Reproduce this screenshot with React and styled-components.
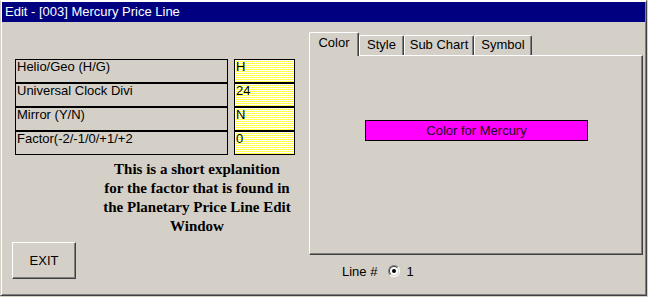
import { Fragment } from 'react';
import styled, { createGlobalStyle } from 'styled-components';

const Global = createGlobalStyle`
  html, body {
    margin: 0;
    padding: 0;
    background: #d4d0c8;
    font-family: "Liberation Sans", Arial, sans-serif;
    font-size: 13px;
    color: #000;
  }
`

const Window = styled.div`
  width: 647px;
  height: 296px;
  box-sizing: border-box;
  border: 1px solid;
  border-color: #fff #404040 #404040 #d4d0c8;
  box-shadow: inset 1px 1px #fff, inset -1px -1px #808080;
  padding: 1px 1px 0 1px;
  display: flex;
  flex-direction: column;
  background: #d4d0c8;
`

const TitleBar = styled.div`
  height: 20px;
  background: #000080;
  color: #fff;
  font-size: 13px;
  line-height: 20px;
  padding-left: 3px;
  white-space: nowrap;
`

const Body = styled.div`
  display: flex;
  flex: 1;
`

const LeftCol = styled.div`
  width: 307px;
  box-sizing: border-box;
  padding: 37px 0 0 10px;
  display: flex;
  flex-direction: column;
  align-items: flex-start;
`

const FieldGrid = styled.div`
  margin-left: 3px;
  display: grid;
  grid-template-columns: 213px 61px;
  grid-auto-rows: 24px;
  column-gap: 6px;
`

const Cell = styled.div`
  box-sizing: border-box;
  border: 1px solid #000;
  line-height: 14px;
  white-space: nowrap;
  overflow: hidden;
`

const Label = styled(Cell)`
  padding-left: 1px;
`

const Value = styled(Cell)`
  padding-left: 1px;
  background-color: #fff;
  background-image: conic-gradient(from 90deg at 1px 1px, #ffff40 25%, transparent 0);
  background-size: 2px 2px;
`

const Note = styled.div`
  width: 200px;
  margin: 5px 0 0 85px;
  font-family: "Liberation Serif", "Times New Roman", serif;
  font-weight: bold;
  font-size: 15px;
  line-height: 19px;
  text-align: center;
  white-space: nowrap;
`

const Button = styled.button`
  margin-top: 6px;
  width: 64px;
  height: 37px;
  box-sizing: border-box;
  background: #d4d0c8;
  border: 1px solid;
  border-color: #fff #404040 #404040 #fff;
  box-shadow: inset -1px -1px #808080;
  font-family: "Liberation Sans", Arial, sans-serif;
  font-size: 13px;
  color: #000;
  padding: 0;
`

const RightCol = styled.div`
  width: 334px;
  padding-top: 10px;
  display: flex;
  flex-direction: column;
`

const TabRow = styled.div`
  display: flex;
  align-items: flex-end;
  height: 24px;
  margin-bottom: -1px;
  position: relative;
  z-index: 1;
`

const Tab = styled.div`
  width: ${p => p.$w}px;
  height: ${p => (p.$active ? 24 : 20)}px;
  margin-bottom: ${p => (p.$active ? 0 : 1)}px;
  box-sizing: border-box;
  background: #d4d0c8;
  border: 1px solid;
  border-bottom: none;
  border-color: #fff #404040 #fff #fff;
  border-radius: 2px 2px 0 0;
  box-shadow: inset -1px 0 #808080;
  padding-top: ${p => (p.$active ? 2 : 1)}px;
  line-height: 15px;
  text-align: center;
  white-space: nowrap;
`

const Panel = styled.div`
  height: 200px;
  box-sizing: border-box;
  border: 1px solid;
  border-color: #fff #404040 #404040 #fff;
  box-shadow: inset -1px -1px #808080;
  padding: 64px 0 0 55px;
`

const ColorBar = styled.div`
  width: 223px;
  height: 21px;
  box-sizing: border-box;
  border: 1px solid #000;
  background: ${p => p.$color};
  color: #200020;
  text-align: center;
  line-height: 19px;
`

const LineRow = styled.div`
  display: flex;
  align-items: center;
  height: 16px;
  margin-top: 8px;
  padding-left: 33px;
`

const Radio = styled.span`
  width: 12px;
  height: 12px;
  box-sizing: border-box;
  border-radius: 50%;
  border: 1px solid;
  border-color: #808080 #fff #fff #808080;
  margin: 0 6px 0 11px;
  display: flex;
`

const RadioInner = styled.span`
  flex: 1;
  border-radius: 50%;
  border: 1px solid;
  border-color: #404040 #d4d0c8 #d4d0c8 #404040;
  background: #fff;
  display: flex;
  align-items: center;
  justify-content: center;
`

const Dot = styled.span`
  width: 4px;
  height: 4px;
  border-radius: 50%;
  background: #000;
`

const fields = [
  ['Helio/Geo (H/G)', 'H'],
  ['Universal Clock Divi', '24'],
  ['Mirror (Y/N)', 'N'],
  ['Factor(-2/-1/0/+1/+2', '0'],
]

const tabs = [
  { name: 'Color', w: 50 },
  { name: 'Style', w: 45 },
  { name: 'Sub Chart', w: 70 },
  { name: 'Symbol', w: 58 },
]

export default function App() {
  return (
    <>
      <Global />
      <Window>
        <TitleBar>Edit - [003] Mercury Price Line</TitleBar>
        <Body>
          <LeftCol>
            <FieldGrid>
              {fields.map(([label, value]) => (
                <Fragment key={label}>
                  <Label>{label}</Label>
                  <Value>{value}</Value>
                </Fragment>
              ))}
            </FieldGrid>
            <Note>
              This is a short explanition<br />
              for the factor that is found in<br />
              the Planetary Price Line Edit<br />
              Window
            </Note>
            <Button>EXIT</Button>
          </LeftCol>
          <RightCol>
            <TabRow>
              {tabs.map((t, i) => (
                <Tab key={t.name} $w={t.w} $active={i === 0}>{t.name}</Tab>
              ))}
            </TabRow>
            <Panel>
              <ColorBar $color="#ff00ff">Color for Mercury</ColorBar>
            </Panel>
            <LineRow>
              Line #
              <Radio><RadioInner><Dot /></RadioInner></Radio>
              1
            </LineRow>
          </RightCol>
        </Body>
      </Window>
    </>
  );
}
